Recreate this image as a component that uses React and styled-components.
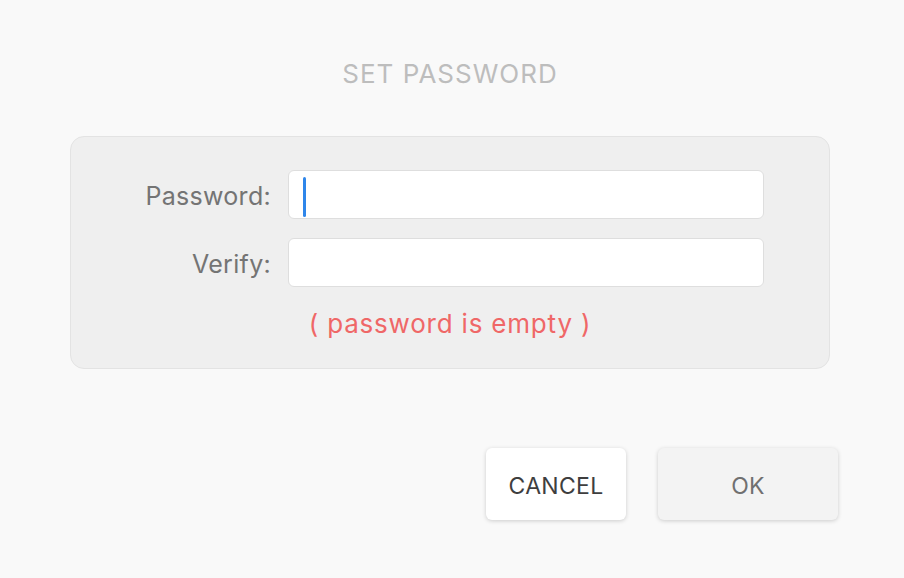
import React from "react";
import styled, { createGlobalStyle } from "styled-components";

const Global = createGlobalStyle`
  html, body { margin: 0; padding: 0; background: #f9f9f9; }
  body { font-family: Inter, Roboto, "Liberation Sans", sans-serif; }
`;

const Page = styled.div`
  width: 904px;
  height: 578px;
  box-sizing: border-box;
  display: flex;
  flex-direction: column;
  align-items: center;
  padding-top: 57px;
  background: #f9f9f9;
`;

const Title = styled.h1`
  margin: 0 0 0 -4px;
  font-size: 26px;
  font-weight: 400;
  line-height: 34px;
  letter-spacing: 1px;
  color: #bdbdbd;
`;

const Panel = styled.div`
  margin: 45px 0 0 -4px;
  width: 760px;
  height: 233px;
  box-sizing: border-box;
  background: #efefef;
  border: 1px solid #e3e3e3;
  border-radius: 14px;
  padding: 33px 0 0 0;
  display: flex;
  flex-direction: column;
`;

const Row = styled.div`
  display: grid;
  grid-template-columns: 200px 476px;
  column-gap: 17px;
  align-items: center;
  margin-bottom: ${(p) => p.$mb || 0}px;
`;

const Label = styled.label`
  text-align: right;
  font-size: 25px;
  letter-spacing: 0.3px;
  line-height: 30px;
  padding-top: 3px;
  color: #747474;
`;

const Field = styled.div`
  position: relative;
  height: 49px;
  box-sizing: border-box;
  background: #fff;
  border: 1px solid #dedede;
  border-radius: 6px;
`;

const Caret = styled.span`
  position: absolute;
  left: 14px;
  top: 6px;
  width: 3px;
  height: 40px;
  border-radius: 2px;
  background: #2f86ea;
`;

const Error = styled.div`
  margin-top: 21px;
  text-align: center;
  font-size: 26px;
  letter-spacing: 0.8px;
  color: #ef6767;
`;

const Actions = styled.div`
  align-self: stretch;
  display: flex;
  justify-content: flex-end;
  gap: 32px;
  padding-right: 66px;
  margin-top: 79px;
`;

const Button = styled.button`
  width: ${(p) => p.$w}px;
  height: 72px;
  border: none;
  border-radius: 6px;
  background: ${(p) => (p.$primary ? "#f3f3f3" : "#ffffff")};
  color: ${(p) => (p.$primary ? "#707070" : "#3e3e3e")};
  box-shadow: 0 1px 4px rgba(0, 0, 0, 0.18);
  font-family: Inter, Roboto, "Liberation Sans", sans-serif;
  font-size: 23px;
  letter-spacing: 0.3px;
  padding: 4px 0 0 0;
  cursor: pointer;
`;

export default function App() {
  return (
    <>
      <Global />
      <Page>
        <Title>SET PASSWORD</Title>
        <Panel>
          <Row $mb={19}>
            <Label>Password:</Label>
            <Field>
              <Caret />
            </Field>
          </Row>
          <Row>
            <Label>Verify:</Label>
            <Field />
          </Row>
          <Error>( password is empty )</Error>
        </Panel>
        <Actions>
          <Button $w={140}>CANCEL</Button>
          <Button $w={180} $primary>OK</Button>
        </Actions>
      </Page>
    </>
  );
}
